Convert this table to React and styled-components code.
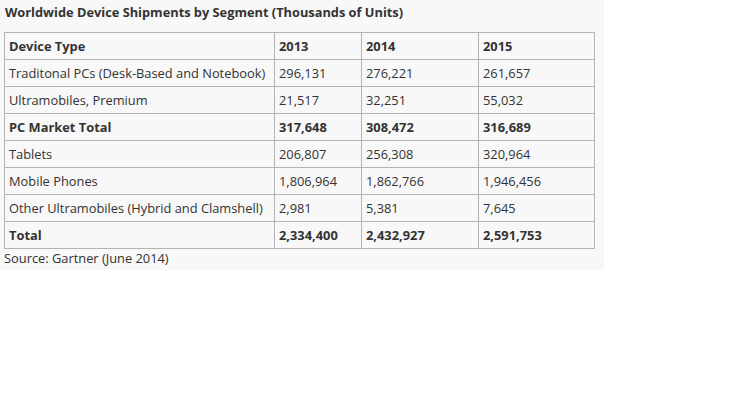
import styled, { createGlobalStyle } from 'styled-components'

const Global = createGlobalStyle`
  body {
    margin: 0;
    background: #fff;
    font-family: "Open Sans", "Liberation Sans", sans-serif;
    color: #333;
  }
`;

const Panel = styled.div`
  width: 604px;
  height: 270px;
  background: #f8f8f8;
  padding: 3px 0 0 4px;
  box-sizing: border-box;
`;

const Title = styled.h3`
  margin: 0 0 0 1px;
  font-size: 12.8px;
  font-weight: 700;
  line-height: 18px;
  color: #333;
`;

const Table = styled.table`
  margin-top: 11px;
  border-collapse: collapse;
  width: 590px;
  table-layout: fixed;
  font-size: 12.85px;
  border: 1px solid #aaa;
`;

const Cell = styled.td`
  border: 1px solid #b4b4b4;
  height: 26px;
  padding: 0 0 0 4px;
  font-weight: ${(p) => (p.$bold ? 700 : 400)};
  white-space: nowrap;
  line-height: 18px;
  vertical-align: middle;
`;

const Source = styled.div`
  font-size: 12.85px;
  line-height: 18px;
  margin-top: 0;
`;

const rows = [
  ['Device Type', '2013', '2014', '2015', true],
  ['Traditonal PCs (Desk-Based and Notebook)', '296,131', '276,221', '261,657'],
  ['Ultramobiles, Premium', '21,517', '32,251', '55,032'],
  ['PC Market Total', '317,648', '308,472', '316,689', true],
  ['Tablets', '206,807', '256,308', '320,964'],
  ['Mobile Phones', '1,806,964', '1,862,766', '1,946,456'],
  ['Other Ultramobiles (Hybrid and Clamshell)', '2,981', '5,381', '7,645'],
  ['Total', '2,334,400', '2,432,927', '2,591,753', true],
];

export default function App() {
  return (
    <>
      <Global />
      <Panel>
        <Title>Worldwide Device Shipments by Segment (Thousands of Units)</Title>
        <Table>
          <colgroup>
            <col style={{ width: 270 }} />
            <col style={{ width: 87 }} />
            <col style={{ width: 117 }} />
            <col style={{ width: 116 }} />
          </colgroup>
          <tbody>
            {rows.map(([name, a, b, c, bold]) => (
              <tr key={name}>
                <Cell $bold={bold}>{name}</Cell>
                <Cell $bold={bold}>{a}</Cell>
                <Cell $bold={bold}>{b}</Cell>
                <Cell $bold={bold}>{c}</Cell>
              </tr>
            ))}
          </tbody>
        </Table>
        <Source>Source: Gartner (June 2014)</Source>
      </Panel>
    </>
  )
}
